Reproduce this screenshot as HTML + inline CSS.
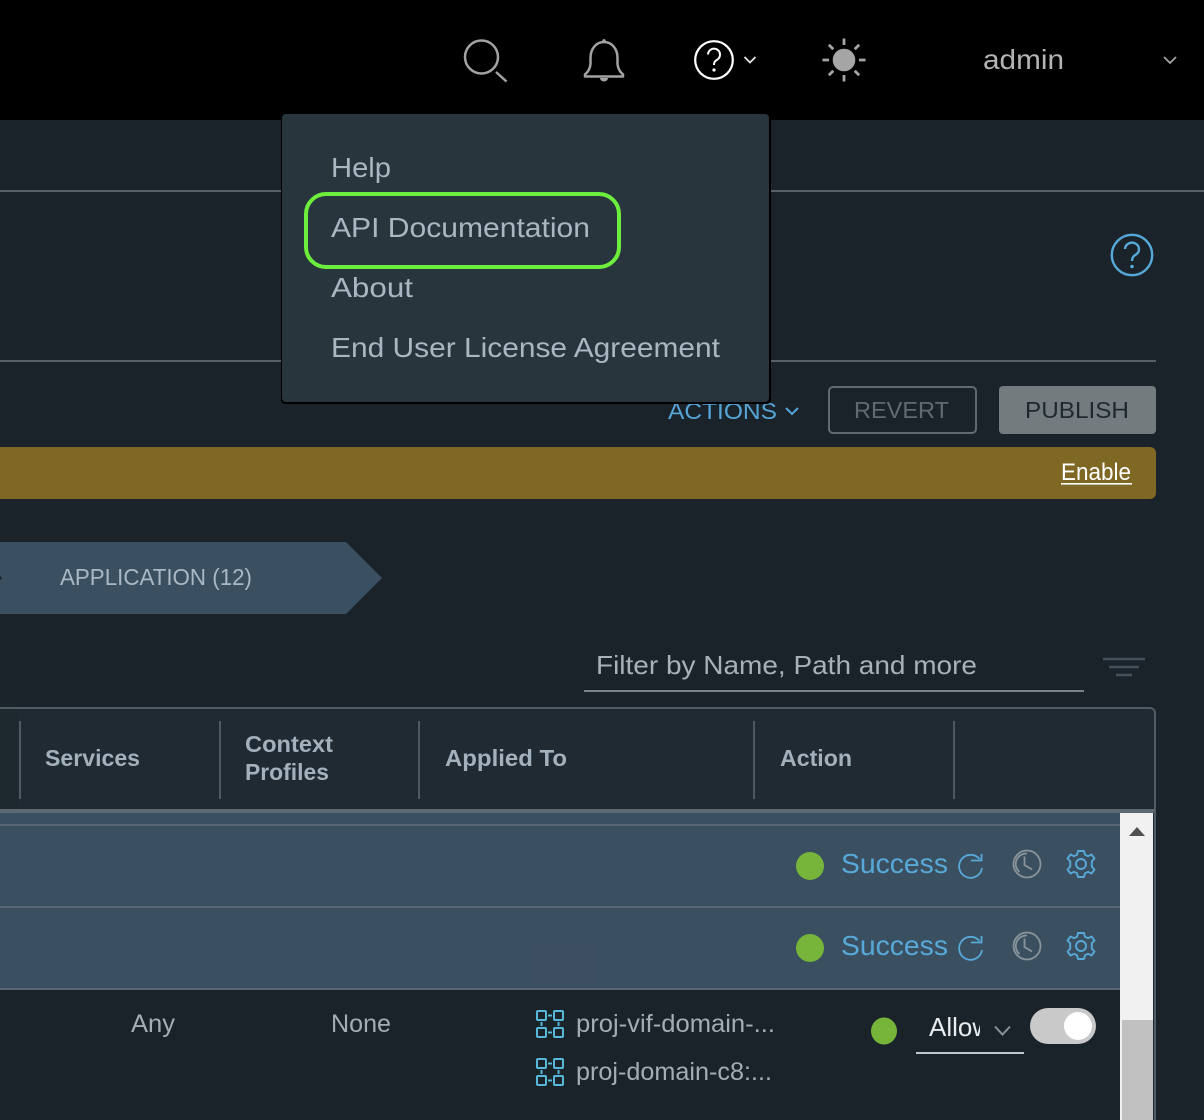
<!DOCTYPE html>
<html>
<head>
<meta charset="utf-8">
<style>
html,body{margin:0;padding:0;background:#1b232a;width:1204px;height:1120px;overflow:hidden}
svg{display:block}
text{font-family:"Liberation Sans",sans-serif}
</style>
</head>
<body>
<svg width="1204" height="1120" viewBox="0 0 1204 1120" xmlns="http://www.w3.org/2000/svg">
<rect width="1204" height="1120" fill="#1b232a"/>
<!-- header -->
<rect width="1204" height="120" fill="#000"/>
<g fill="none" stroke="#a3a3a3" stroke-width="2.500">
<circle cx="481.500" cy="57" r="16.500"/>
<path d="M496 72L506.500 81.500"/>
<path d="M585 76.500H623V74.500C620 72 618 69 617.500 64V58C617.500 49 612 42 604 42C596 42 590.500 49 590.500 58V64C590 69 588 72 585 74.500Z" stroke-linejoin="round"/>
</g>
<path d="M602 42a2 3 0 0 1 4 0z" fill="#a3a3a3"/>
<path d="M600 78h8a4 3.500 0 0 1-8 0z" fill="#a3a3a3"/>
<circle cx="714" cy="60" r="18.800" fill="none" stroke="#fff" stroke-width="2.200"/>
<path d="M708 54.500A6 6 0 1 1 717.500 59.500C715 61 714 62 714 65" fill="none" stroke="#fff" stroke-width="2"/>
<circle cx="714" cy="70" r="1.600" fill="#fff"/>
<path d="M744.500 57L750 62.500L755.500 57" fill="none" stroke="#e6e6e6" stroke-width="1.800"/>
<circle cx="844" cy="60" r="11.300" fill="#a5a5a5"/>
<path d="M844 38.500V45M844 75V81.500M822.500 60H829M859 60H865.500M828.800 44.800L833.300 49.300M854.700 70.700L859.200 75.200M828.800 75.200L833.300 70.700M854.700 49.300L859.200 44.800" stroke="#a5a5a5" stroke-width="2.800" fill="none"/>
<text x="983" y="69" font-size="28" fill="#b4b4b4" textLength="81" lengthAdjust="spacingAndGlyphs">admin</text>
<path d="M1164 57L1170 63L1176 57" fill="none" stroke="#a3a3a3" stroke-width="1.800"/>

<!-- lines -->
<rect x="0" y="190" width="1204" height="2" fill="#566069"/>
<rect x="0" y="360" width="1156" height="2" fill="#566069"/>
<circle cx="1132" cy="255" r="20.200" fill="none" stroke="#56a8d8" stroke-width="2.400"/>
<path d="M1125 249A7 6.500 0 1 1 1136 254.500C1133.500 256 1132 257.500 1132 261" fill="none" stroke="#56a8d8" stroke-width="2.400"/>
<circle cx="1132" cy="266.500" r="1.800" fill="#56a8d8"/>

<!-- action bar -->
<text x="668" y="419" font-size="23" fill="#55a5d6" textLength="109" lengthAdjust="spacingAndGlyphs">ACTIONS</text>
<path d="M786 408L792 414L798 408" fill="none" stroke="#55a5d6" stroke-width="2"/>
<rect x="829" y="387" width="147" height="46" rx="4" fill="none" stroke="#5f6a72" stroke-width="2"/>
<text x="854" y="418" font-size="23" fill="#5f6a72" textLength="95" lengthAdjust="spacingAndGlyphs">REVERT</text>
<rect x="999" y="386" width="157" height="48" rx="4" fill="#737b7f"/>
<text x="1025" y="418" font-size="23" fill="#1f282e" textLength="104" lengthAdjust="spacingAndGlyphs">PUBLISH</text>
<path d="M0 447H1150a6 6 0 0 1 6 6V493a6 6 0 0 1-6 6H0Z" fill="#7f6724"/>
<text x="1061" y="480" font-size="24" fill="#fff" textLength="70" lengthAdjust="spacingAndGlyphs">Enable</text>
<rect x="1061" y="483" width="71" height="1.600" fill="#fff"/>

<!-- breadcrumb chevron -->
<path d="M0 542H346L382 578L346 614H0Z" fill="#3a5060"/>
<path d="M0 575.500L2 578L0 580.500Z" fill="#1b232a"/>
<text x="60" y="585" font-size="23" fill="#a9b8c4" textLength="192" lengthAdjust="spacingAndGlyphs">APPLICATION (12)</text>

<!-- filter -->
<text x="596" y="674" font-size="26" fill="#a7b1b9" textLength="381" lengthAdjust="spacingAndGlyphs">Filter by Name, Path and more</text>
<rect x="584" y="690" width="500" height="2" fill="#77838b"/>
<path d="M1103 659H1145M1109 667H1139M1116 675H1132" stroke="#434f59" stroke-width="2.600" fill="none"/>

<!-- table -->
<path d="M0 708H1150a5 5 0 0 1 5 5V1120H0Z" fill="#1f2a32"/>
<path d="M0 708H1150a5 5 0 0 1 5 5V1120" fill="none" stroke="#4f5b65" stroke-width="2"/>
<rect x="0" y="709" width="18" height="100" fill="#1c252c" opacity=".5"/>
<g fill="#4d5963">
<rect x="19" y="721" width="2" height="78"/>
<rect x="219" y="721" width="2" height="78"/>
<rect x="418" y="721" width="2" height="78"/>
<rect x="753" y="721" width="2" height="78"/>
<rect x="953" y="721" width="2" height="78"/>
</g>
<g font-size="23" font-weight="700" fill="#a3b1bd">
<text x="45" y="766" textLength="95" lengthAdjust="spacingAndGlyphs">Services</text>
<text x="245" y="752" textLength="88" lengthAdjust="spacingAndGlyphs">Context</text>
<text x="245" y="780" textLength="84" lengthAdjust="spacingAndGlyphs">Profiles</text>
<text x="445" y="766" textLength="122" lengthAdjust="spacingAndGlyphs">Applied To</text>
<text x="780" y="766" textLength="72" lengthAdjust="spacingAndGlyphs">Action</text>
</g>
<!-- rows -->
<rect x="0" y="809" width="1154" height="4" fill="#5c6872"/>
<rect x="0" y="813" width="1120" height="176" fill="#3a5060"/>
<rect x="0" y="824" width="1120" height="2" fill="#586773"/>
<rect x="0" y="906" width="1120" height="2" fill="#586773"/>
<rect x="533" y="945" width="64" height="44" fill="#3c4e5f"/>
<rect x="0" y="988" width="1120" height="2" fill="#586773"/>
<rect x="0" y="990" width="1120" height="130" fill="#1b232a"/>

<g>
<circle cx="810" cy="866" r="14" fill="#77b53a"/>
<text x="841" y="873" font-size="28" fill="#58a8d8" textLength="107" lengthAdjust="spacingAndGlyphs">Success</text>
<path d="M979.500 859A11.500 11.500 0 1 0 982 868" fill="none" stroke="#58a8d8" stroke-width="1.800"/>
<path d="M971 860.500H981.500V854" fill="none" stroke="#58a8d8" stroke-width="1.800"/>
<g fill="none" stroke="#8a949b" stroke-width="1.800">
<circle cx="1027" cy="864" r="13.500"/>
<path d="M1019.500 872A10.500 10.500 0 0 1 1027 853.500"/>
<path d="M1024.500 856.500V865L1032 869.500"/>
</g>
<g fill="none" stroke="#58a8d8" stroke-width="1.900">
<circle cx="1081" cy="864" r="5"/>
<path d="M1078 851H1084L1085 854.800L1088 856.200L1091.500 854.500L1094.500 858.500L1091.800 861.300V866.700L1094.500 869.500L1091.500 873.500L1088 871.800L1085 873.200L1084 877H1078L1077 873.200L1074 871.800L1070.500 873.500L1067.500 869.500L1070.200 866.700V861.300L1067.500 858.500L1070.500 854.500L1074 856.200L1077 854.800Z" stroke-linejoin="round"/>
</g>
</g>
<g transform="translate(0,82)">
<circle cx="810" cy="866" r="14" fill="#77b53a"/>
<text x="841" y="873" font-size="28" fill="#58a8d8" textLength="107" lengthAdjust="spacingAndGlyphs">Success</text>
<path d="M979.500 859A11.500 11.500 0 1 0 982 868" fill="none" stroke="#58a8d8" stroke-width="1.800"/>
<path d="M971 860.500H981.500V854" fill="none" stroke="#58a8d8" stroke-width="1.800"/>
<g fill="none" stroke="#8a949b" stroke-width="1.800">
<circle cx="1027" cy="864" r="13.500"/>
<path d="M1019.500 872A10.500 10.500 0 0 1 1027 853.500"/>
<path d="M1024.500 856.500V865L1032 869.500"/>
</g>
<g fill="none" stroke="#58a8d8" stroke-width="1.900">
<circle cx="1081" cy="864" r="5"/>
<path d="M1078 851H1084L1085 854.800L1088 856.200L1091.500 854.500L1094.500 858.500L1091.800 861.300V866.700L1094.500 869.500L1091.500 873.500L1088 871.800L1085 873.200L1084 877H1078L1077 873.200L1074 871.800L1070.500 873.500L1067.500 869.500L1070.200 866.700V861.300L1067.500 858.500L1070.500 854.500L1074 856.200L1077 854.800Z" stroke-linejoin="round"/>
</g>
</g>

<!-- bottom row -->
<g font-size="25" fill="#a4adb5">
<text x="131" y="1032" textLength="44" lengthAdjust="spacingAndGlyphs">Any</text>
<text x="331" y="1032" textLength="60" lengthAdjust="spacingAndGlyphs">None</text>
<text x="576" y="1032" textLength="199" lengthAdjust="spacingAndGlyphs">proj-vif-domain-...</text>
<text x="576" y="1080" textLength="196" lengthAdjust="spacingAndGlyphs">proj-domain-c8:...</text>
</g>
<g fill="none" stroke="#57b8d8" stroke-width="2">
<rect x="537" y="1011" width="9" height="9" rx="1"/>
<rect x="554" y="1011" width="9" height="9" rx="1"/>
<rect x="537" y="1028" width="9" height="9" rx="1"/>
<rect x="554" y="1028" width="9" height="9" rx="1"/>
<path d="M548 1015.500H552M548 1032.500H552M541.500 1022V1026M558.500 1022V1026"/>
</g>
<g fill="none" stroke="#57b8d8" stroke-width="2" transform="translate(0,48)">
<rect x="537" y="1011" width="9" height="9" rx="1"/>
<rect x="554" y="1011" width="9" height="9" rx="1"/>
<rect x="537" y="1028" width="9" height="9" rx="1"/>
<rect x="554" y="1028" width="9" height="9" rx="1"/>
<path d="M548 1015.500H552M548 1032.500H552M541.500 1022V1026M558.500 1022V1026"/>
</g>
<ellipse cx="884" cy="1031" rx="13" ry="13.500" fill="#77b53a"/>
<svg x="929" y="1010" width="51" height="36" viewBox="0 0 51 36"><text x="0" y="26" font-size="26" fill="#e8ecef">Allow</text></svg>
<path d="M995 1026.500L1002.500 1034.500L1010 1026.500" fill="none" stroke="#8a9298" stroke-width="2"/>
<rect x="916" y="1052" width="108" height="2" fill="#c0c8ce"/>
<rect x="1030" y="1008" width="66" height="36" rx="18" fill="#c9c9c9"/>
<circle cx="1078" cy="1026" r="14" fill="#fff"/>

<!-- scrollbar -->
<rect x="1120" y="813" width="33" height="307" fill="#f1f1f1"/>
<rect x="1122" y="1020" width="31" height="100" fill="#c1c1c1"/>
<path d="M1129 836H1145L1137 827Z" fill="#505050"/>

<!-- dropdown -->
<rect x="281" y="113" width="490" height="291" rx="4" fill="#000"/>
<rect x="282" y="114" width="487" height="288" rx="4" fill="#28353d"/>
<g font-size="28" fill="#aab6c2">
<text x="331" y="177" textLength="60" lengthAdjust="spacingAndGlyphs">Help</text>
<text x="331" y="237" textLength="259" lengthAdjust="spacingAndGlyphs">API Documentation</text>
<text x="331" y="297" textLength="82" lengthAdjust="spacingAndGlyphs">About</text>
<text x="331" y="357" textLength="389" lengthAdjust="spacingAndGlyphs">End User License Agreement</text>
</g>
<rect x="306" y="194" width="313" height="73" rx="20" fill="none" stroke="#6eee3c" stroke-width="4"/>
</svg>
</body>
</html>
